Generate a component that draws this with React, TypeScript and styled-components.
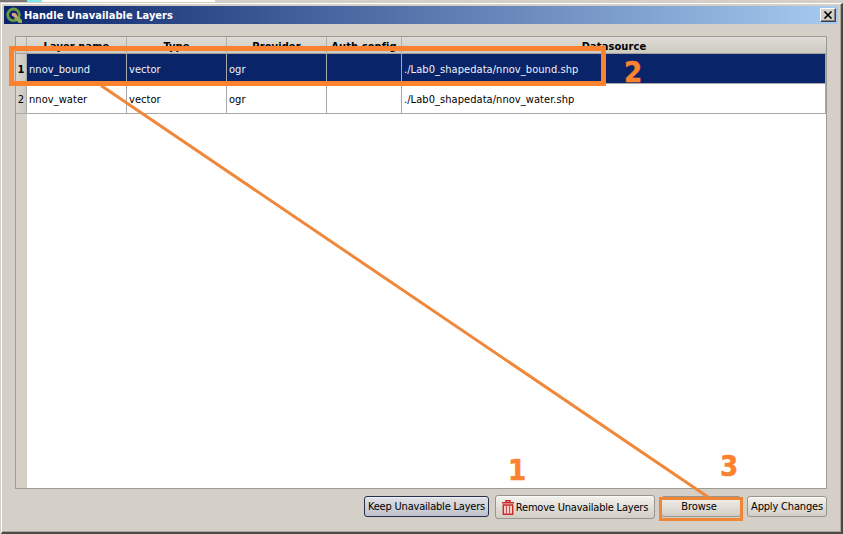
import React from "react";
import styled, { createGlobalStyle } from "styled-components";

const ORANGE = "#fb8330";

const GlobalStyle = createGlobalStyle`
  *, *::before, *::after { box-sizing: border-box; }
  html, body, #root { margin: 0; padding: 0; width: 843px; height: 534px; overflow: hidden; }
  body {
    background: #d4d0c8;
    color: #000;
    font-family: "DejaVu Sans Condensed", "DejaVu Sans", sans-serif;
    font-stretch: condensed;
    font-size: 11px;
    line-height: 14px;
  }
`;

const Screen = styled.div`
  position: relative;
  display: flex;
  flex-direction: column;
  width: 843px;
  height: 534px;
  background: #d4d0c8;
`;

const Backdrop = styled.div`
  flex: none;
  display: grid;
  grid-template-columns: 27px 15px 173px 1fr;
  height: 2px;
`;

const Strip = styled.span<{ $color: string }>`
  background: ${(p) => p.$color};
`;

const Dialog = styled.section`
  flex: 1;
  display: flex;
  flex-direction: column;
  margin: 1px 0 0 1px;
  padding: 2px 2px 0;
  background: #d4d0c8;
  border: 1px solid #fff;
  border-right: 2px solid #4b4a48;
  border-bottom: 2px solid #4b4a48;
  box-shadow: inset -1px -1px 0 #aaa69f;
`;

const TitleBar = styled.header`
  flex: none;
  display: flex;
  align-items: center;
  width: 834px;
  height: 18px;
  padding: 0 2px 0 2px;
  background: linear-gradient(90deg, #0a246a, #a6caf0);
  color: #fff;
`;

const TitleIcon = styled.svg`
  flex: none;
  width: 16px;
  height: 16px;
`;

const Text = styled.span<{ $spacing?: number; $bold?: boolean }>`
  display: block;
  white-space: pre;
  font-weight: ${(p) => (p.$bold ? 700 : 400)};
  letter-spacing: ${(p) => p.$spacing ?? 0}px;
`;

const Title = styled(Text)`
  flex: 1;
  margin-left: 2px;
  padding-top: 2px;
`;

const CloseButton = styled.button`
  display: flex;
  align-items: center;
  justify-content: center;
  width: 16px;
  height: 14px;
  padding: 0;
  background: #d4d0c8;
  border: 1px solid #fff;
  border-right-color: #404040;
  border-bottom-color: #404040;
  box-shadow: inset -1px -1px 0 #808080;
`;

const Table = styled.div`
  flex: none;
  display: flex;
  flex-direction: column;
  width: 812px;
  height: 453px;
  margin: 12px 0 0 11px;
  background: #fff;
  border: 1px solid #9c9a94;
`;

const columns = "11px 100px 100px 100px 75px 424px";

const HeaderRow = styled.div`
  flex: none;
  display: grid;
  grid-template-columns: ${columns};
  height: 17px;
  background: linear-gradient(#e0ddd8, #cdcac2);
  border-bottom: 1px solid #a5a29b;
`;

const HeaderCell = styled.div`
  display: flex;
  justify-content: center;
  padding-top: 3px;
  border-right: 1px solid #b1aea6;
  overflow: hidden;

  &:last-child { border-right: 0; }
`;

const Row = styled.div<{ $selected?: boolean }>`
  flex: none;
  display: grid;
  grid-template-columns: ${columns};
  width: 810px;
  height: 30px;
  background: ${(p) => (p.$selected ? "#0a246a" : "#fff")};
  color: ${(p) => (p.$selected ? "#f0f2f8" : "#000")};
`;

const Cell = styled.div`
  display: flex;
  align-items: center;
  padding: 2px 0 0 2px;
  border-right: 1px solid #a9a9a9;
  border-bottom: 1px solid #a9a9a9;
  overflow: hidden;
`;

const IndexCell = styled(Cell)`
  justify-content: center;
  padding: 3px 0 0;
  background: linear-gradient(90deg, #d8d5cf, #cbc8c0);
  color: #000;
`;

const Filler = styled.div`
  flex: 1;
  width: 11px;
  background: #d4d0c8;
`;

const Actions = styled.footer`
  display: flex;
  align-items: flex-start;
  padding: 6px 0 0 360px;
`;

const Button = styled.button<{ $width: number; $gap: number; $primary?: boolean; $tall?: boolean }>`
  display: flex;
  align-items: center;
  justify-content: center;
  flex: none;
  width: ${(p) => p.$width}px;
  height: ${(p) => (p.$tall ? 24 : 21)}px;
  margin: ${(p) => (p.$tall ? 0 : 1)}px ${(p) => p.$gap}px 0 0;
  padding: ${(p) => (p.$tall ? 2 : 1)}px 0 0;
  border: 1px solid ${(p) => (p.$primary ? "#26304c" : "#98958d")};
  border-radius: 3px;
  background: ${(p) =>
    p.$primary ? "linear-gradient(#e0e1e5, #c0c2cb)" : "linear-gradient(#f4f2ed, #e2dfd8 50%, #d2cec5)"};
  box-shadow: inset 0 1px 0 ${(p) => (p.$primary ? "#edeff4" : "#fbfaf7")};
  color: #000;
  font: inherit;
`;

const BrowseLabel = styled.span`
  display: block;
  letter-spacing: -0.1px;
  padding-right: 4px;
`;

const TrashIcon = styled.svg`
  flex: none;
  width: 12px;
  height: 15px;
  margin: 0 2px 1px 0;
`;

const Highlight = styled.div<{ $x: number; $y: number; $w: number; $h: number; $line: number; $color: string }>`
  position: absolute;
  left: ${(p) => p.$x}px;
  top: ${(p) => p.$y}px;
  width: ${(p) => p.$w}px;
  height: ${(p) => p.$h}px;
  border: ${(p) => p.$line}px solid ${(p) => p.$color};
`;

const Connector = styled.svg`
  position: absolute;
  inset: 0;
  width: 843px;
  height: 534px;
  pointer-events: none;
`;

const StepNumber = styled.span<{ $x: number; $y: number }>`
  position: absolute;
  left: ${(p) => p.$x}px;
  top: ${(p) => p.$y}px;
  color: ${ORANGE};
  font-size: 29px;
  font-weight: 700;
  line-height: 34px;
  -webkit-text-stroke: 0.5px ${ORANGE};
`;

const headers = ["Layer name", "Type", "Provider", "Auth config", "Datasource"];

const layers = [
  { name: "nnov_bound", type: "vector", provider: "ogr", auth: "", source: "./Lab0_shapedata/nnov_bound.shp" },
  { name: "nnov_water", type: "vector", provider: "ogr", auth: "", source: "./Lab0_shapedata/nnov_water.shp" },
];

export default function App() {
  return (
    <>
      <GlobalStyle />
      <Screen>
        <Backdrop>
          <Strip $color="#7b7b79" />
          <Strip $color="#7eeaf0" />
          <Strip $color="#fff" />
          <Strip $color="#d4d0c8" />
        </Backdrop>
        <Dialog>
          <TitleBar>
            <TitleIcon viewBox="0 0 16 16">
              <circle cx="7.5" cy="7.8" r="5.8" fill="none" stroke="#6a9a48" strokeWidth="2.8" />
              <path d="M8.5 9h3L16 13v3h-3L8.5 11.8z" fill="#8fb052" />
              <path d="M5.8 6h3.4l1.8 2v2.4H9.2L5.8 8.6z" fill="#dda184" />
            </TitleIcon>
            <Title $bold $spacing={0.03}>Handle Unavailable Layers</Title>
            <CloseButton aria-label="Close">
              <svg width="10" height="8" viewBox="0 0 10 8">
                <path d="M1.5 0.5l7 7M8.5 0.5l-7 7" stroke="#000" strokeWidth="1.6" />
              </svg>
            </CloseButton>
          </TitleBar>
          <Table>
            <HeaderRow>
              <HeaderCell />
              {headers.map((h) => (
                <HeaderCell key={h}>
                  <Text $bold $spacing={0.1}>{h}</Text>
                </HeaderCell>
              ))}
            </HeaderRow>
            {layers.map((l, i) => (
              <Row key={l.name} $selected={i === 0}>
                <IndexCell>
                  <Text $bold={i === 0}>{i + 1}</Text>
                </IndexCell>
                {[l.name, l.type, l.provider, l.auth, l.source].map((v, c) => (
                  <Cell key={c}>
                    <Text $spacing={0.06}>{v}</Text>
                  </Cell>
                ))}
              </Row>
            ))}
            <Filler />
          </Table>
          <Actions>
            <Button $width={125} $gap={6} $primary>
              <Text $spacing={-0.2}>Keep Unavailable Layers</Text>
            </Button>
            <Button $width={160} $gap={6} $tall>
              <TrashIcon viewBox="0 0 12 15">
                <path d="M4 2V.8h4V2M0 2.7h12" fill="none" stroke="#c8282e" strokeWidth="1.5" />
                <path d="M1.3 5h9.4v9.2H1.3z" fill="#f3d2cc" stroke="#c8282e" strokeWidth="1.4" />
                <path d="M4.4 5.5v8M7.6 5.5v8" stroke="#cf4548" strokeWidth="1" />
              </TrashIcon>
              <Text $spacing={-0.2}>Remove Unavailable Layers</Text>
            </Button>
            <Button $width={80} $gap={6}>
              <BrowseLabel>Browse</BrowseLabel>
            </Button>
            <Button $width={80} $gap={0}>
              <Text $spacing={-0.17}>Apply Changes</Text>
            </Button>
          </Actions>
        </Dialog>
        <Connector viewBox="0 0 843 534">
          <path d="M101 85.5L708 497" stroke="#ef883a" strokeWidth="3" />
        </Connector>
        <Highlight $x={9} $y={46} $w={597} $h={40} $line={5} $color={ORANGE} />
        <Highlight $x={659} $y={497} $w={84} $h={24} $line={3} $color="#f08536" />
        <StepNumber $x={508} $y={453}>1</StepNumber>
        <StepNumber $x={624} $y={55}>2</StepNumber>
        <StepNumber $x={720} $y={449}>3</StepNumber>
      </Screen>
    </>
  );
}
